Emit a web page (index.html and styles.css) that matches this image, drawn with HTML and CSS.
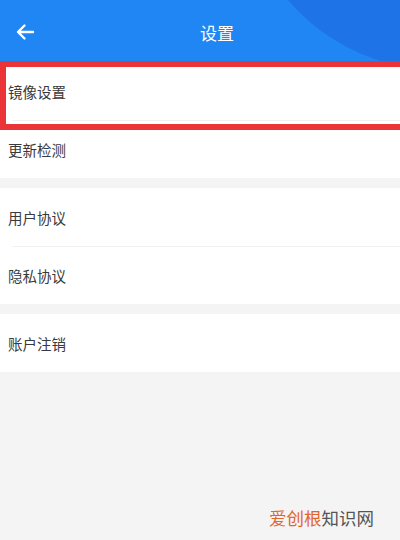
FILE: index.html
```html
<!DOCTYPE html>
<html>
  <head>
    <meta charset="UTF-8">
    <title>设置</title>
    <link rel="stylesheet" href="styles.css">
  </head>
  <body>
    <div class="page">
      <div class="header">
        <span class="back">
          <svg width="20" height="18" viewBox="0 0 20 18">
            <path d="M18 9H3M9.5 2.5L3 9l6.5 6.5" fill="none" stroke="#fff" stroke-width="2.4" stroke-linecap="round" stroke-linejoin="round"/>
          </svg>
        </span>
        <span class="title">设置</span>
      </div>

      <div class="list">
        <div class="group">
          <div class="item">镜像设置</div>
          <div class="item">更新检测</div>
        </div>
        <div class="group">
          <div class="item">用户协议</div>
          <div class="item">隐私协议</div>
        </div>
        <div class="group">
          <div class="item">账户注销</div>
        </div>
        <!-- highlight box from the screenshot -->
        <div class="mark"></div>
      </div>

      <div class="watermark"><span class="wm-a">爱创根</span><span class="wm-b">知识网</span></div>
    </div>
  </body>
</html>
```

FILE: styles.css
```css
body {
  margin: 0;
  background-color: #F4F4F4;
  font-family: "Noto Sans CJK SC", "Noto Sans", sans-serif;
}

.page {
  position: relative;
  width: 400px;
  height: 540px;
  overflow: hidden;
}

/* Header */
.header {
  position: relative;
  height: 62px;
  background-color: #2086F3;
  display: flex;
  align-items: center;
  justify-content: center;
  overflow: hidden;
}

.header:before {
  content: "";
  position: absolute;
  width: 400px;
  height: 400px;
  border-radius: 50%;
  left: 240px;
  top: -330px;
  background-color: #1E74E6;
}

.back {
  position: absolute;
  left: 15px;
  top: 23px;
  display: flex;
}

.title {
  position: relative;
  color: #FFFFFF;
  font-size: 17px;
  margin-left: 34px;
  margin-top: 2px;
}

/* List */
.list {
  position: relative;
}

.group {
  background-color: #FFFFFF;
  margin-bottom: 10px;
}

.item {
  height: 58px;
  display: flex;
  align-items: center;
  padding-left: 8px;
  font-size: 14.5px;
  color: #3A3A3A;
  position: relative;
}

.item + .item:before {
  content: "";
  position: absolute;
  left: 12px;
  right: 0;
  top: 0;
  height: 1px;
  background-color: #F1F1F1;
}

.mark {
  position: absolute;
  left: 0;
  top: -1px;
  width: 406px;
  height: 69px;
  border: 6px solid #EA3437;
  box-sizing: border-box;
}

/* Watermark */
.watermark {
  position: absolute;
  right: 26px;
  bottom: 10px;
  font-size: 17.5px;
}

.wm-a {
  color: #E2652B;
}

.wm-b {
  color: #555555;
}
```
